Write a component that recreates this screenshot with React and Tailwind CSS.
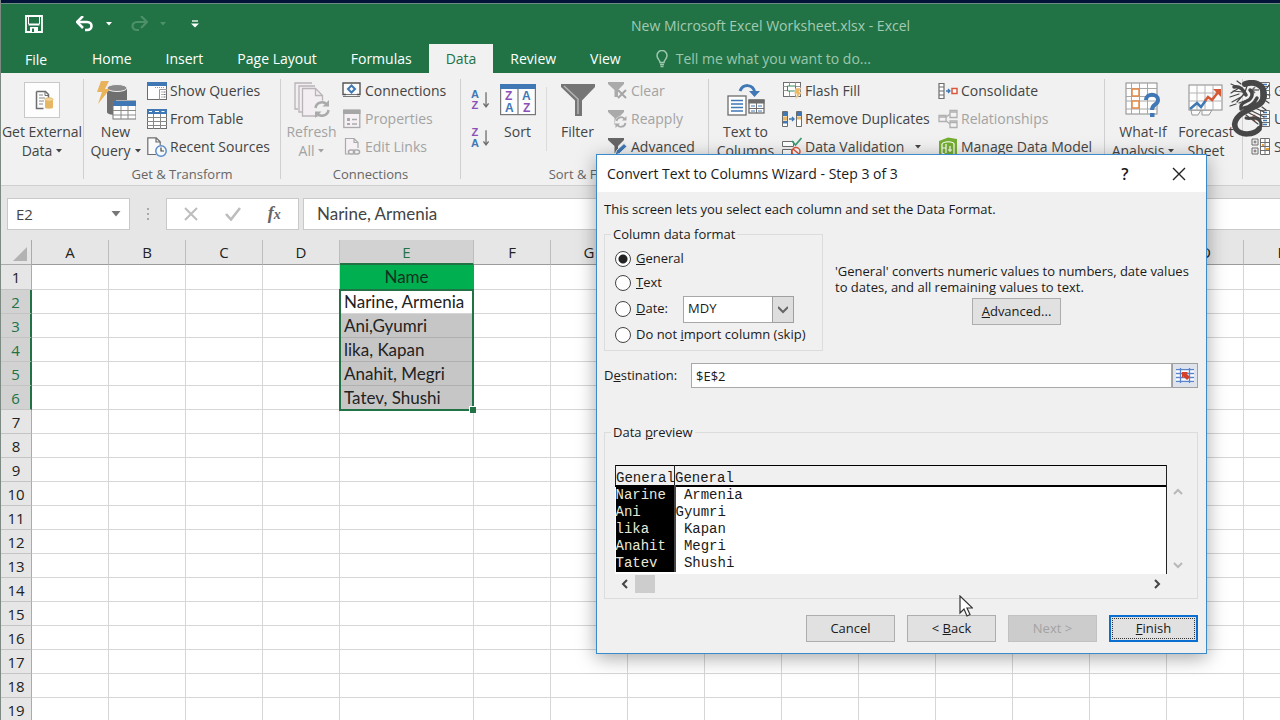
import React, { useState } from 'react';
import clsx from 'clsx';

const GREY = '#6d6d6d';
const BLUE = '#3f78b4';

const TABS = ['Home', 'Insert', 'Page Layout', 'Formulas', 'Data', 'Review', 'View'];
const COLUMNS = ['A', 'B', 'C', 'D', 'E', 'F', 'G', 'H', 'I', 'J', 'K', 'L', 'M', 'N', 'O', 'P'];
const ROWS = Array.from({ length: 19 }, (_, i) => i + 1);
const CELLS = {
  E1: 'Name',
  E2: 'Narine, Armenia',
  E3: 'Ani,Gyumri',
  E4: 'lika, Kapan',
  E5: 'Anahit, Megri',
  E6: 'Tatev, Shushi',
};
const PREVIEW = [
  ['Narine', ' Armenia'],
  ['Ani', 'Gyumri'],
  ['lika', ' Kapan'],
  ['Anahit', ' Megri'],
  ['Tatev', ' Shushi'],
];

const Caret = ({ className }) => (
  <svg viewBox="0 0 6 4" className={clsx('inline-block w-1.5 h-1 shrink-0', className)}>
    <path d="M0 0h6L3 3.6z" fill="currentColor" />
  </svg>
);

/* ---------- ribbon icons ---------- */

const ExternalDataIcon = () => (
  <svg viewBox="0 0 36 36" className="w-9 h-9">
    <rect x=".5" y=".5" width="35" height="35" fill="#fdfdfd" stroke="#c8c8c8" />
    <path d="M12.5 9.500h9l3 3v4M12.500 9.500v17h7" fill="none" stroke={GREY} strokeWidth="1.500" />
    <path d="M21 9.500v4h4" fill="none" stroke={GREY} />
    <path d="M15 13h4M15 16h6M15 19h5M15 22h4" stroke="#8a8a8a" />
    <path d="M21 17.500v8c0 1.600 8 1.600 8 0v-8z" fill="#e6b866" />
    <ellipse cx="25" cy="17.500" rx="4" ry="1.700" fill="#f5d8a0" stroke="#e6b866" />
  </svg>
);

const NewQueryIcon = () => (
  <svg viewBox="0 0 40 40" className="w-10 h-10">
    <path d="M11 8v24c0 2 4 3 9 3V20h11V8z" fill="#6f6f6f" />
    <ellipse cx="21" cy="8" rx="10" ry="3.500" fill="#8a8a8a" stroke="#f1f1f1" />
    <path d="M5 1h8L9 9h5L2 24l4-12H1z" fill="#e9b35c" />
    <rect x="17" y="21" width="23" height="18" fill="#fff" stroke="#777" />
    <rect x="17" y="21" width="23" height="5" fill={BLUE} />
    <path d="M25 26v13M32 26v13M17 30.500h23M17 35h23" stroke="#8b8b8b" />
  </svg>
);

const ShowQueriesIcon = () => (
  <svg viewBox="0 0 20 18" className="w-5 h-[18px]">
    <rect x=".5" y=".5" width="19" height="17" fill="#fff" stroke={GREY} />
    <path d="M0 0h20v4H0z" fill={BLUE} />
    <path d="M12.500 7.500v10M12.500 7.500H20" stroke="#999" />
    <path d="M8 5.500h10" stroke="#999" strokeDasharray="1 1" />
    <path d="M14.500 10h1M14.500 12.500h1M14.500 15h1M16.500 10h2M16.500 12.500h2M16.500 15h2" stroke={GREY} />
  </svg>
);

const FromTableIcon = () => (
  <svg viewBox="0 0 20 20" className="w-5 h-5">
    <rect x=".5" y=".5" width="19" height="19" fill="#fff" stroke={GREY} />
    <path d="M0 0h20v5H0z" fill={BLUE} />
    <path d="M2 2.500h3M8 2.500h4M14.500 2.500h3" stroke="#fff" />
    <path d="M6.500 5v15M13.500 5v15M0 8.500h20M0 12.500h20M0 16.500h20" stroke="#888" />
  </svg>
);

const RecentIcon = () => (
  <svg viewBox="0 0 20 20" className="w-5 h-5">
    <path d="M9 17.500H.8V.8h8.400l4 4V8M9 .8v4.200h4" fill="#fafafa" stroke={GREY} strokeWidth="1.200" />
    <circle cx="14" cy="14" r="5.200" fill="#f6f9fc" stroke="#5b8cc8" strokeWidth="1.500" />
    <path d="M14 10.500V14h3" fill="none" stroke="#444" strokeWidth="1.200" />
  </svg>
);

const RefreshAllIcon = () => (
  <svg viewBox="0 0 36 36" className="w-9 h-9">
    <g fill="#f3eef2" stroke="#b9b4b8" strokeWidth="1.300">
      <path d="M18 1H1v26h3M21 4H5v26h3" />
      <path d="M8.500 6.500h13l7 7V34h-20z" />
      <path d="M21.500 6.500v7h7" fill="none" />
    </g>
    <circle cx="28" cy="27" r="8.500" fill="#f1f1f1" />
    <path d="M21.500 26a6.500 6.500 0 0 1 12-2.500M34.500 28a6.500 6.500 0 0 1-12 2.500" fill="none" stroke="#aaa" strokeWidth="2.500" />
    <path d="M35 18v6.500h-6.500zM21 36v-6.500h6.500z" fill="#aaa" />
  </svg>
);

const ConnectionsIcon = () => (
  <svg viewBox="0 0 20 18" className="w-5 h-[18px]">
    <path d="M4 12.500H1V1h17v11.500h-3" fill="#fbfbfb" stroke="#555" strokeWidth="1.400" />
    <path d="M1 14.500h17M4 12.500h11" stroke="#777" />
    <path d="M9.500 3.500l3.500 3.500-3.500 3.500L6 7z" fill="none" stroke={BLUE} strokeWidth="2" />
  </svg>
);

const PropertiesIcon = () => (
  <svg viewBox="0 0 18 20" className="w-5 h-5">
    <rect x=".8" y="1" width="16" height="17.500" fill="#f4f0f4" stroke="#aaa" strokeWidth="1.300" />
    <path d="M0 1h17.500v4H0z" fill="#a6a6a6" />
    <path d="M4 9h3v3H4zM4 14h3v2H4z" fill="#aaa" />
    <path d="M9 10.500h5M9 15h5" stroke="#aaa" strokeWidth="1.500" />
  </svg>
);

const EditLinksIcon = () => (
  <svg viewBox="0 0 20 20" className="w-5 h-5">
    <path d="M7 17H3.500V1.500h8.500l4 4V11M12 1.500v4h4" fill="#f5f1f5" stroke="#aaa" strokeWidth="1.200" />
    <rect x="6.500" y="13" width="6" height="4" rx="2" fill="none" stroke="#aaa" strokeWidth="1.600" />
    <rect x="11.500" y="13" width="6" height="4" rx="2" fill="none" stroke="#aaa" strokeWidth="1.600" />
  </svg>
);

const SortButton = ({ letters, label }) => (
  <button type="button" aria-label={label} className="flex items-center gap-1">
    <span className="flex flex-col font-['Liberation_Sans',sans-serif] font-bold text-[11px] leading-[11px]">
      {letters.map((l) => (
        <span key={l} className={l === 'A' ? 'text-[#3f78b4]' : 'text-[#8a50b8]'}>{l}</span>
      ))}
    </span>
    <svg viewBox="0 0 7 18" className="w-[7px] h-[18px]">
      <path d="M3.500 0v17M.5 13l3 4 3-4" fill="none" stroke={GREY} strokeWidth="1.500" />
    </svg>
  </button>
);

const SortIcon = () => (
  <svg viewBox="0 0 36 32" className="w-9 h-8">
    <rect x=".6" y=".6" width="34.800" height="30" fill="#fdfdfd" stroke="#777" strokeWidth="1.200" />
    <path d="M0 0h36v5H0z" fill={BLUE} />
    <path d="M18 5v26" stroke="#777" strokeWidth="1.200" />
    <g fontSize="12" fontWeight="700" fontFamily="Liberation Sans, sans-serif">
      <text x="5" y="16" fill="#8a50b8">Z</text>
      <text x="5" y="28" fill={BLUE}>A</text>
      <text x="22" y="16" fill={BLUE}>A</text>
      <text x="23" y="28" fill="#8a50b8">Z</text>
    </g>
  </svg>
);

const FunnelIcon = () => (
  <svg viewBox="0 0 34 34" className="w-[34px] h-[34px]">
    <path d="M0 1h34v3L21 17.500V33h-7V17.500L0 4z" fill="#757575" />
    <path d="M3 3l14 13v15" fill="none" stroke="#b5b5b5" strokeWidth="1.500" />
  </svg>
);

const SmallFunnel = ({ color, kind }) => (
  <svg viewBox="0 0 20 20" className="w-5 h-5">
    <path d="M0 1h16v2l-6 6v7H6.500V9L0 3z" fill={color} />
    {kind === 'clear' && <path d="M10 9l8 8M18 9l-8 8" stroke="#a5a5a5" strokeWidth="2" />}
    {kind === 'reapply' && (
      <>
        <circle cx="13" cy="13" r="6" fill="#f1f1f1" />
        <path d="M8.500 12a4.600 4.600 0 0 1 8.500-1.500M17.500 14a4.600 4.600 0 0 1-8.500 1.500" fill="none" stroke="#aaa" strokeWidth="1.800" />
        <path d="M18.500 7v4.500H14zM7.500 19v-4.500H12z" fill="#aaa" />
      </>
    )}
    {kind === 'advanced' && <path d="M7 18l1.500-4.500L16 6.500l3 3-7.500 7z" fill={BLUE} stroke="#f1f1f1" />}
  </svg>
);

const TextToColumnsIcon = () => (
  <svg viewBox="0 0 38 34" className="w-[38px] h-[34px]">
    <rect x="1" y="13" width="18" height="19" fill="#fff" stroke={GREY} strokeWidth="1.300" />
    <path d="M4 17.500h12M4 21h12M4 24.500h12M4 28h12" stroke={BLUE} strokeWidth="1.300" />
    <rect x="22" y="17" width="15" height="13" fill="#fff" stroke={GREY} strokeWidth="1.300" />
    <path d="M21.500 16.500h16v4h-16z" fill={GREY} />
    <path d="M29.500 20v10M22 25.500h15" stroke={GREY} />
    <path d="M24 23h4M31 23h4M24 28h4M31 28h4" stroke={BLUE} />
    <path d="M13 8c3-7 13-8 15 2" fill="none" stroke={BLUE} strokeWidth="3" />
    <path d="M22 8h11l-5.500 6z" fill={BLUE} />
  </svg>
);

const FlashFillIcon = () => (
  <svg viewBox="0 0 20 20" className="w-5 h-5">
    <rect x="1.500" y="1.500" width="17" height="14" fill="#fff" stroke={GREY} />
    <path d="M1.500 5.500h17M1.500 9.500h17M7.500 1.500v14M13.500 1.500v14" stroke="#999" />
    <path d="M5.500 5h8v5h-8z" fill="#fff" stroke="#3b8a5a" />
    <path d="M14 7h5l-2 4h3l-7 8 2-6h-3z" fill="#efb961" stroke="#f1f1f1" strokeWidth=".5" />
  </svg>
);

const DuplicatesIcon = () => (
  <svg viewBox="0 0 20 18" className="w-5 h-[18px]">
    <path d="M.5 1.500h5v15h-5zM14.500 1.500h5v15h-5z" fill="#fff" stroke={GREY} />
    <path d="M1 2h4v4H1zM1 11h4v2.500H1zM15 2h4v4h-4z" fill={BLUE} />
    <path d="M1 6.500h4v4H1zM15 6.500h4v3h-4z" fill="#e6b866" />
    <path d="M7 9h5M10 7l2 2-2 2" fill="none" stroke={BLUE} strokeWidth="1.400" />
  </svg>
);

const ValidationIcon = () => (
  <svg viewBox="0 0 20 20" className="w-5 h-5">
    <path d="M.5 4.500h11v5H.500zM.500 12.500h9v5h-9z" fill="#fff" stroke={GREY} />
    <path d="M10 4l3.500 4L19.500 1" fill="none" stroke="#3c9a72" strokeWidth="1.800" />
    <circle cx="14" cy="14.500" r="4" fill="#fff" stroke="#d9573c" strokeWidth="1.500" />
    <path d="M11 12l6 5" stroke="#d9573c" strokeWidth="1.500" />
  </svg>
);

const ConsolidateIcon = () => (
  <svg viewBox="0 0 20 18" className="w-5 h-[18px]">
    <path d="M1 1.500h5v15H1zM1 5h5M1 9h5M1 13h5" fill="#fff" stroke={GREY} strokeWidth="1.200" />
    <path d="M8 9h4M10 7l2 2-2 2" fill="none" stroke={BLUE} strokeWidth="1.300" />
    <rect x="14" y="6.500" width="5" height="5" fill="#fff" stroke="#d9573c" strokeWidth="1.500" />
  </svg>
);

const RelationshipsIcon = () => (
  <svg viewBox="0 0 20 20" className="w-5 h-5">
    <g fill="#f5f1f5" stroke="#b0b0b0" strokeWidth="1.300">
      <path d="M7 9l5-4M7 11l5 4" />
      <path d="M1 6.500h7v6H1zM12 1.500h7v7h-7zM12 12h7v6.500h-7z" />
      <path d="M1 8h7M12 3h7M12 13.500h7" />
    </g>
  </svg>
);

const DataModelIcon = () => (
  <svg viewBox="0 0 20 20" className="w-5 h-5">
    <path d="M1 4l9-3.500L19 2v17l-10 1-8-2z" fill="#74ae32" />
    <path d="M4 7c2-3 11-3 12 0v10M4 7v9c2 2 4 2 6 2M4 11h4M8 7v9M12 9v6M10 13h4" fill="none" stroke="#fff" strokeWidth="1.200" />
  </svg>
);

const WhatIfIcon = () => (
  <svg viewBox="0 0 36 36" className="w-9 h-9">
    <rect x="1" y="1" width="31" height="31" fill="#fdfdfd" stroke="#8a8a8a" />
    <path d="M6.500 1v31M14.500 1v31M22.500 1v31M1 6.500h31M1 14.500h31M1 19h31M1 27h31" stroke="#a8a8a8" />
    <path d="M7 7h7v7H7zM7 19h7v7H7z" fill="#fff" stroke="#e58a45" strokeWidth="1.500" />
    <path d="M21 18c0-7 12-7 12 0 0 5-6 4-6 10" fill="none" stroke={BLUE} strokeWidth="4" />
    <path d="M25 31h4.500v4H25z" fill={BLUE} />
  </svg>
);

const ForecastIcon = () => (
  <svg viewBox="0 0 36 32" className="w-9 h-8">
    <path d="M3 26h10l-3 5H4zM14 26h10l-3 5h-7z" fill="#fafafa" stroke="#999" />
    <rect x="1" y="1" width="33" height="25" fill="#fdfdfd" stroke="#8a8a8a" />
    <path d="M9 1v25M17 1v25M25 1v25M1 9h33M1 17h33" stroke="#b5b5b5" />
    <path d="M2 25l7-6 4 4 5-7" fill="none" stroke={BLUE} strokeWidth="2.500" />
    <path d="M17 17l3-4 4 3 7-9" fill="none" stroke="#d65a36" strokeWidth="2.500" />
    <path d="M25 5h8v8z" fill="#d65a36" />
  </svg>
);

const OutlineIcon = ({ kind }) => (
  <svg viewBox="0 0 20 20" className="w-5 h-5">
    <path d="M9.500 1.500h9v16h-9zM9.500 5.500h9M9.500 9.500h9M9.500 13.500h9" fill="#fff" stroke={GREY} />
    {kind === 'subtotal' ? (
      <>
        <path d="M14 1.500v16" stroke={GREY} />
        <path d="M1 2h6v6H1zM1 11h6v6H1zM2.500 5h3M4 3.500v3M2.500 14h3M4 12.500v3" fill="none" stroke={GREY} />
        <path d="M11 8h2M15 12h3" stroke="#e6a23c" strokeWidth="2" />
      </>
    ) : (
      <>
        <path d="M12 3.500h4M12 7.500h4M12 11.500h4M12 15.500h4" stroke={BLUE} strokeWidth="1.300" />
        <path d="M8 9H1M4 6L1 9l3 3" fill="none" stroke={kind === 'ungroup' ? '#d65a36' : GREY} strokeWidth="1.500" />
      </>
    )}
  </svg>
);

/* ---------- ribbon building blocks ---------- */

const BigButton = ({ icon, lines, caret, disabled, className }) => (
  <button
    type="button"
    disabled={disabled}
    className={clsx('flex flex-col items-center shrink-0 whitespace-nowrap leading-[19px]', disabled ? 'text-[#a3a3a3]' : 'text-[#444]', className)}
  >
    <span className="h-[45px] flex items-center">{icon}</span>
    {lines.map((line, i) => (
      <span key={line} className="flex items-center gap-1">
        {line}
        {caret && i === lines.length - 1 && <Caret />}
      </span>
    ))}
  </button>
);

const SmallButton = ({ icon, label, disabled, caret }) => (
  <button
    type="button"
    disabled={disabled}
    className={clsx('h-7 flex items-center gap-[3px] whitespace-nowrap', disabled ? 'text-[#a3a3a3]' : 'text-[#444]')}
  >
    {icon}
    {label}
    {caret && <Caret className="ml-2" />}
  </button>
);

const Group = ({ label, className, children }) => (
  <section className={clsx('flex shrink-0', className)}>
    <div className="flex-1 flex flex-col pt-1">
      <div className="flex h-[86px]">{children}</div>
      {label && <div className="h-[22px] leading-[22px] text-[13px] text-center text-[#666] whitespace-nowrap">{label}</div>}
    </div>
    <div className="w-px my-1.5 bg-[#d0d0d0]" />
  </section>
);

const TitleBar = () => (
  <header className="bg-[#217346] border-t border-[#6f8a80] text-white">
    <div className="flex items-center h-10 pl-6">
      <button type="button" aria-label="Save" className="w-[18px]">
        <svg viewBox="0 0 18 18" className="w-[18px] h-[18px]">
          <path d="M1 1h16v16H1z" fill="none" stroke="#fff" strokeWidth="1.800" />
          <path d="M3.500 9.500h11" stroke="#fff" strokeWidth="2" />
          <path d="M3.500 1v8M14.500 1v8" stroke="#fff" />
          <path d="M5 12h8v5H5z" fill="#fff" />
          <path d="M7 13.500h2V17H7z" fill="#217346" />
        </svg>
      </button>
      <button type="button" aria-label="Undo" className="ml-[33px] flex items-center gap-3">
        <svg viewBox="0 0 18 16" className="w-[18px] h-4">
          <path d="M2 6h9c6 0 6 8 0 8H9" fill="none" stroke="#fff" strokeWidth="2.600" />
          <path d="M7 0L1 6l6 6" fill="none" stroke="#fff" strokeWidth="2.600" />
        </svg>
        <Caret />
      </button>
      <button type="button" aria-label="Redo" disabled className="ml-[18px] flex items-center gap-3 text-[#4d9069]">
        <svg viewBox="0 0 18 16" className="w-[18px] h-4">
          <path d="M16 6H7C1 6 1 14 7 14h2" fill="none" stroke="#4d9069" strokeWidth="2.200" />
          <path d="M11 0l6 6-6 6" fill="none" stroke="#4d9069" strokeWidth="2.200" />
        </svg>
        <Caret />
      </button>
      <button type="button" aria-label="Customize Quick Access Toolbar" className="ml-[25px]">
        <svg viewBox="0 0 8 8" className="w-2 h-2">
          <path d="M1 1h6" stroke="#fff" strokeWidth="1.300" />
          <path d="M0 3.500h8l-4 4z" fill="#fff" />
        </svg>
      </button>
      <h1 className="ml-[432px] pt-1 text-sm text-[#a3cbb3] whitespace-nowrap">New Microsoft Excel Worksheet.xlsx - Excel</h1>
    </div>
    <nav className="flex h-[29px] text-sm">
      <button type="button" className="w-[70px] pt-0.5 mr-1">File</button>
      {TABS.map((tab) => (
        <button
          key={tab}
          type="button"
          className={clsx('px-[17px] whitespace-nowrap', tab === 'Data' ? 'bg-[#f1f1f1] text-[#217346]' : 'text-white')}
        >
          {tab}
        </button>
      ))}
      <button type="button" className="flex items-center gap-2 ml-[18px] text-[#9cc7ad] whitespace-nowrap">
        <svg viewBox="0 0 12 18" className="w-3 h-[18px]">
          <path d="M4 12.500c0-2.500-3-3.500-3-7a5 5 0 0 1 10 0c0 3.500-3 4.500-3 7zM4 14.500h4M4.500 16.500h3" fill="none" stroke="#9cc7ad" strokeWidth="1.500" />
        </svg>
        Tell me what you want to do...
      </button>
    </nav>
  </header>
);

const Ribbon = () => (
  <div className="flex h-[113px] bg-[#f1f1f1] border-b border-[#cfcfcf] text-sm">
    <Group className="w-[83px]">
      <BigButton className="w-full" icon={<ExternalDataIcon />} lines={['Get External', 'Data']} caret />
    </Group>
    <Group label="Get & Transform" className="w-[197px]">
      <BigButton className="w-[63px]" icon={<NewQueryIcon />} lines={['New', 'Query']} caret />
      <div>
        <SmallButton icon={<ShowQueriesIcon />} label="Show Queries" />
        <SmallButton icon={<FromTableIcon />} label="From Table" />
        <SmallButton icon={<RecentIcon />} label="Recent Sources" />
      </div>
    </Group>
    <Group label="Connections" className="w-[180px]">
      <BigButton className="w-[61px]" icon={<RefreshAllIcon />} lines={['Refresh', 'All']} caret disabled />
      <div>
        <SmallButton icon={<ConnectionsIcon />} label="Connections" />
        <SmallButton icon={<PropertiesIcon />} label="Properties" disabled />
        <SmallButton icon={<EditLinksIcon />} label="Edit Links" disabled />
      </div>
    </Group>
    <Group label="Sort & Filter" className="w-[248px]">
      <div className="flex flex-col gap-4 pt-3 pl-2.5 w-7">
        <SortButton label="Sort A to Z" letters={['A', 'Z']} />
        <SortButton label="Sort Z to A" letters={['Z', 'A']} />
      </div>
      <BigButton className="w-[57px]" icon={<SortIcon />} lines={['Sort']} />
      <div className="w-px h-16 mt-2.5 bg-[#dcdcdc]" />
      <BigButton className="w-[61px]" icon={<FunnelIcon />} lines={['Filter']} />
      <div>
        <SmallButton icon={<SmallFunnel color="#aaa" kind="clear" />} label="Clear" disabled />
        <SmallButton icon={<SmallFunnel color="#aaa" kind="reapply" />} label="Reapply" disabled />
        <SmallButton icon={<SmallFunnel color="#666" kind="advanced" />} label="Advanced" />
      </div>
    </Group>
    <Group className="w-[396px]">
      <BigButton className="w-[73px]" icon={<TextToColumnsIcon />} lines={['Text to', 'Columns']} />
      <div className="w-[156px]">
        <SmallButton icon={<FlashFillIcon />} label="Flash Fill" />
        <SmallButton icon={<DuplicatesIcon />} label="Remove Duplicates" />
        <SmallButton icon={<ValidationIcon />} label="Data Validation" caret />
      </div>
      <div>
        <SmallButton icon={<ConsolidateIcon />} label="Consolidate" />
        <SmallButton icon={<RelationshipsIcon />} label="Relationships" disabled />
        <SmallButton icon={<DataModelIcon />} label="Manage Data Model" />
      </div>
    </Group>
    <Group className="w-[138px]">
      <BigButton className="w-[76px]" icon={<WhatIfIcon />} lines={['What-If', 'Analysis']} caret />
      <BigButton className="w-[50px]" icon={<ForecastIcon />} lines={['Forecast', 'Sheet']} />
    </Group>
    <Group className="pl-2">
      <div>
        <SmallButton icon={<OutlineIcon kind="group" />} label="Group" />
        <SmallButton icon={<OutlineIcon kind="ungroup" />} label="Ungroup" />
        <SmallButton icon={<OutlineIcon kind="subtotal" />} label="Subtotal" />
      </div>
    </Group>
  </div>
);

const FormulaBar = () => (
  <div className="flex pt-3 pb-2.5 pl-1.5 h-[54px] bg-[#e6e6e6] text-[#444]">
    <div className="flex items-center w-[123px] bg-white border border-[#c9c9c9]">
      <input aria-label="Name Box" defaultValue="E2" className="w-full min-w-0 pl-2 text-[15px] outline-none" />
      <Caret className="w-2.5 h-1.5 mr-2 text-[#777]" />
    </div>
    <svg viewBox="0 0 4 16" className="w-1 h-4 mx-4 mt-2 shrink-0">
      <path d="M1 2h2v2H1zM1 7h2v2H1zM1 12h2v2H1z" fill="#aaa" />
    </svg>
    <div className="flex items-center justify-around w-[133px] px-1 bg-white border border-[#c9c9c9]">
      <button type="button" aria-label="Cancel entry">
        <svg viewBox="0 0 14 14" className="w-3.5 h-3.5"><path d="M1 1l12 12M13 1L1 13" stroke="#bdbdbd" strokeWidth="2" /></svg>
      </button>
      <button type="button" aria-label="Enter">
        <svg viewBox="0 0 16 14" className="w-4 h-3.5"><path d="M1 7l5 5.500L15 1" fill="none" stroke="#bdbdbd" strokeWidth="2.600" /></svg>
      </button>
      <button type="button" className="font-['Liberation_Serif',serif] italic font-bold text-lg leading-5 text-[#666]">
        f<span className="text-sm">x</span>
      </button>
    </div>
    <input
      aria-label="Formula Bar"
      defaultValue="Narine, Armenia"
      className="flex-1 min-w-0 ml-1 pl-[13px] bg-white border border-r-0 border-[#c9c9c9] font-['Lato',sans-serif] text-[17px] outline-none"
    />
  </div>
);

const Sheet = () => {
  const isSelected = (col, row) => col === 'E' && row >= 2 && row <= 6;

  return (
    <div className="flex-1 overflow-hidden bg-white">
      <table className="table-fixed border-separate border-spacing-0 w-[1320px] font-['Lato',sans-serif] text-[17px] leading-[22px] text-[#222]">
        <colgroup>
          <col className="w-[31px]" />
          {COLUMNS.map((c) => <col key={c} className={c === 'E' ? 'w-[134px]' : 'w-[77px]'} />)}
        </colgroup>
        <thead>
          <tr className="h-[25px] bg-[#e6e6e6] font-['Open_Sans',sans-serif] text-[15px]">
            <th className="p-0 border-r border-b border-[#ababab]">
              <svg viewBox="0 0 14 14" className="w-3.5 h-3.5 ml-auto mr-1 mt-1"><path d="M14 0v14H0z" fill="#b3b3b3" /></svg>
            </th>
            {COLUMNS.map((c) => (
              <th
                key={c}
                className={clsx(
                  'p-0 font-normal border-r border-r-[#bdbdbd]',
                  c === 'E' ? 'bg-[#d2d2d2] text-[#217346] border-b-2 border-b-[#217346]' : 'border-b border-b-[#9b9b9b]'
                )}
              >
                {c}
              </th>
            ))}
          </tr>
        </thead>
        <tbody>
          {ROWS.map((r) => (
            <tr key={r} className={r === 1 ? 'h-[25px]' : 'h-6'}>
              <th
                className={clsx(
                  "p-0 font-normal border-b border-b-[#c4c4c4] font-['Open_Sans',sans-serif] text-[15px]",
                  r >= 2 && r <= 6 ? 'bg-[#d2d2d2] text-[#217346] border-r-2 border-r-[#217346]' : 'bg-[#e6e6e6] border-r border-r-[#ababab]'
                )}
              >
                {r}
              </th>
              {COLUMNS.map((c) => {
                const id = `${c}${r}`;
                return (
                  <td
                    key={id}
                    className={clsx(
                      'p-0 border-r border-b whitespace-nowrap',
                      id === 'E1' && 'bg-[#00b050] border-[#00b050] text-center text-[#14301f]',
                      isSelected(c, r) && 'relative pl-1',
                      isSelected(c, r) && r > 2 ? 'bg-[#c6c6c6] border-[#b0b0b0]' : id !== 'E1' && 'border-[#d6d6d6]'
                    )}
                  >
                    {CELLS[id]}
                    {/* selection frame with its fill handle */}
                    {id === 'E2' && (
                      <span className="absolute z-10 -left-px -top-px w-[135px] h-[122px] border-2 border-[#217346] pointer-events-none">
                        <span className="absolute -right-1 -bottom-1 w-[7px] h-[7px] bg-[#217346] border-l border-t border-white" />
                      </span>
                    )}
                  </td>
                );
              })}
            </tr>
          ))}
        </tbody>
      </table>
    </div>
  );
};

/* ---------- wizard ---------- */

const FormatRadio = ({ value, current, onSelect, className, children }) => (
  <label className={clsx('flex items-center gap-[5px] whitespace-nowrap', className)}>
    <input
      type="radio"
      name="format"
      checked={current === value}
      onChange={() => onSelect(value)}
      className="appearance-none w-4 h-4 rounded-full border border-[#444] bg-white checked:bg-[radial-gradient(circle,#222_0_4px,#fff_5px)]"
    />
    <span>{children}</span>
  </label>
);

const Chevron = ({ d, className }) => (
  <svg viewBox="0 0 10 10" className={clsx('w-2.5 h-2.5', className)}>
    <path d={d} fill="none" stroke="currentColor" strokeWidth="2" />
  </svg>
);

const DialogButton = ({ className, children, ...rest }) => (
  <button type="button" className={clsx('w-[89px] h-[27px] border text-center', className)} {...rest}>
    {children}
  </button>
);

const Wizard = () => {
  const [format, setFormat] = useState('general');

  return (
    <div
      role="dialog"
      aria-labelledby="wizard-title"
      className="absolute z-20 left-[595px] top-[154px] w-[611px] border border-[#3b8bcb] bg-[#f0f0f0] text-[13px] text-[#1a1a1a] shadow-[0_4px_18px_rgba(0,0,0,0.35)]"
    >
      <div className="flex items-center h-[37px] pl-2.5 bg-white">
        <h2 id="wizard-title" className="flex-1 text-sm whitespace-nowrap">Convert Text to Columns Wizard - Step 3 of 3</h2>
        <button type="button" aria-label="Help" className="w-[54px] text-base font-semibold">?</button>
        <button type="button" aria-label="Close" className="w-[54px] flex justify-center">
          <svg viewBox="0 0 14 14" className="w-3.5 h-3.5"><path d="M1 1l12 12M13 1L1 13" stroke="#222" strokeWidth="1.400" /></svg>
        </button>
      </div>

      <form className="pl-[7px] pr-2 pt-[7px] pb-[11px]" onSubmit={(e) => e.preventDefault()}>
        <p className="leading-5">This screen lets you select each column and set the Data Format.</p>

        <div className="flex gap-3 mt-[5px]">
          <fieldset className="w-[219px] shrink-0 px-2.5 pt-[3px] pb-[3px] border border-[#dcdcdc]">
            <legend className="-ml-1 px-0.5 leading-5">Column data format</legend>
            <FormatRadio className="h-6" value="general" current={format} onSelect={setFormat}><u>G</u>eneral</FormatRadio>
            <FormatRadio className="h-6" value="text" current={format} onSelect={setFormat}><u>T</u>ext</FormatRadio>
            <div className="flex items-center h-7">
              <FormatRadio className="w-[68px]" value="date" current={format} onSelect={setFormat}><u>D</u>ate:</FormatRadio>
              <div className="relative">
                <select aria-label="Date format" className="appearance-none w-[111px] h-[27px] pl-1 bg-white border border-[#a8a8a8]">
                  <option>MDY</option>
                </select>
                <span className="absolute right-0 top-0 flex items-center justify-center w-[22px] h-[27px] bg-[#dedede] border border-[#a0a0a0] pointer-events-none">
                  <Chevron d="M0 3l5 5 5-5" className="text-[#666]" />
                </span>
              </div>
            </div>
            <FormatRadio className="h-6" value="skip" current={format} onSelect={setFormat}>Do not <u>i</u>mport column (skip)</FormatRadio>
          </fieldset>
          <div className="flex-1 pt-[39px]">
            <p className="leading-4">'General' converts numeric values to numbers, date values to dates, and all remaining values to text.</p>
            <DialogButton className="block mx-auto mt-[3px] bg-[#e1e1e1] border-[#adadad]"><u>A</u>dvanced...</DialogButton>
          </div>
        </div>

        <div className="flex items-center mt-3">
          <label htmlFor="destination" className="w-[87px]">D<u>e</u>stination:</label>
          <input id="destination" defaultValue="$E$2" className="flex-1 min-w-0 h-[25px] pl-1 bg-white border border-[#a8a8a8]" />
          <button type="button" aria-label="Select range" className="w-[26px] h-[25px] flex items-center justify-center bg-[#dfe3ec] border border-[#a0a0a0]">
            <svg viewBox="0 0 18 15" className="w-[18px] h-[15px]">
              <path d="M0 0h18v15H0z" fill="#fff" />
              <path d="M0 1.500h18M0 5.500h18M0 9.500h18M0 13.500h18M4.500 0v15M13.500 0v15" stroke="#5b84c9" strokeWidth="1.300" />
              <path d="M6 4h6l-1.500 1.500L14 9l-3 3-3.500-3.500L6 10z" fill="#d5402b" />
            </svg>
          </button>
        </div>

        <fieldset className="mt-[34px] pl-2.5 pr-2.5 pb-[5px] border border-[#dcdcdc]">
          <legend className="-ml-1 px-0.5 leading-5">Data <u>p</u>review</legend>
          <div className="flex pt-[23px]">
            <div className="flex-1 pb-0.5 bg-white border-r border-[#222]">
              <table className="w-full table-fixed border-collapse text-left font-['Liberation_Mono',monospace] text-sm leading-[17px] whitespace-pre">
                <colgroup>
                  <col className="w-[59px]" />
                  <col />
                </colgroup>
                <thead>
                  <tr className="h-[19px] bg-[#f0f0f0] border-t border-b-2 border-black">
                    <th className="p-0 pt-1.5 h-[19px] leading-[13px] font-normal border-x border-[#222]">General</th>
                    <th className="p-0 pt-1.5 h-[19px] leading-[13px] font-normal">General</th>
                  </tr>
                </thead>
                <tbody>
                  {PREVIEW.map(([name, place]) => (
                    <tr key={name}>
                      <td className="p-0 bg-black text-[#e8e8d8] border-r-2 border-r-[#444]">{name}</td>
                      <td className="p-0">{place}</td>
                    </tr>
                  ))}
                </tbody>
              </table>
            </div>
            <div className="flex flex-col justify-between w-5 pt-[22px] pb-1 items-end text-[#b8b8b8]">
              <button type="button" aria-label="Scroll up" className="w-[14px]"><Chevron d="M1 7l4-4 4 4" /></button>
              <button type="button" aria-label="Scroll down" className="w-[14px]"><Chevron d="M1 3l4 4 4-4" /></button>
            </div>
          </div>
          <div className="flex items-center h-[19px] mr-5 text-[#444]">
            <button type="button" aria-label="Scroll left" className="w-5 flex justify-center"><Chevron d="M7 1L3 5l4 4" /></button>
            <span className="w-5 h-[18px] bg-[#cdcdcd]" />
            <button type="button" aria-label="Scroll right" className="w-5 ml-auto flex justify-center"><Chevron d="M3 1l4 4-4 4" /></button>
          </div>
        </fieldset>

        <div className="flex justify-end gap-3 mt-4">
          <DialogButton className="bg-[#e1e1e1] border-[#adadad]">Cancel</DialogButton>
          <DialogButton className="bg-[#e1e1e1] border-[#adadad]">&lt; <u>B</u>ack</DialogButton>
          <DialogButton disabled className="bg-[#cccccc] border-[#c2c2c2] text-[#a3a3a3]">Next &gt;</DialogButton>
          <DialogButton className="p-px bg-[#e1e1e1] border-2 border-[#0a6fd0]">
            <span className="flex items-center justify-center w-full h-full border border-dotted border-[#333]"><span><u>F</u>inish</span></span>
          </DialogButton>
        </div>
      </form>
    </div>
  );
};

const DragonMark = () => (
  <svg viewBox="0 0 42 58" className="absolute left-[1228px] top-[80px] w-[42px] h-[58px] pointer-events-none">
    <g fill="none" stroke="#474747" strokeLinecap="round">
      <path d="M16 4c9-3 19 0 19 11 0 9-8 11-15 14" strokeWidth="6" />
      <path d="M20 30C9 34 3 42 7 49c5 7 18 6 23 0" strokeWidth="5.500" />
      <path d="M30 49c4-4 2-10-4-11-5 0-6 1-9 0" strokeWidth="3" />
      <path d="M21 10c4 3 2 9-3 11s-7 4-6 8M28 18c-3 6-8 9-13 10" strokeWidth="3.500" />
      <path d="M5 7c6-1 9 2 12 8" strokeWidth="3.500" />
      <path d="M2 4l7 3M4 11l10 1M1 17l9-3M3 22l9-5M1 26l6-2M12 4L8 1M10 8L2 13M15 14l-7 8M18 20l-8 3M18 6l-3 9M38 8l2-3M39 15h2M37 21l3 2M33 27l4 3M20 33l12 6M23 31l12 6M17 35l12 9M26 28l9 4" strokeWidth="1.200" />
    </g>
  </svg>
);

export default function App() {
  return (
    <div className="relative flex flex-col h-screen overflow-hidden border-l border-[#7d8a84] bg-white font-['Open_Sans',sans-serif]">
      <div className="h-[3px] shrink-0 bg-[#021238]" />
      <TitleBar />
      <Ribbon />
      <FormulaBar />
      <Sheet />
      <Wizard />
      <DragonMark />
      <svg viewBox="0 0 14 22" className="absolute z-30 left-[958px] top-[595px] w-3.5 h-[22px] pointer-events-none">
        <path d="M1 1v17l4-4 3 7 3-1.500-3-6.500h5.500z" fill="#fff" stroke="#333" strokeWidth="1.200" />
      </svg>
    </div>
  );
}
